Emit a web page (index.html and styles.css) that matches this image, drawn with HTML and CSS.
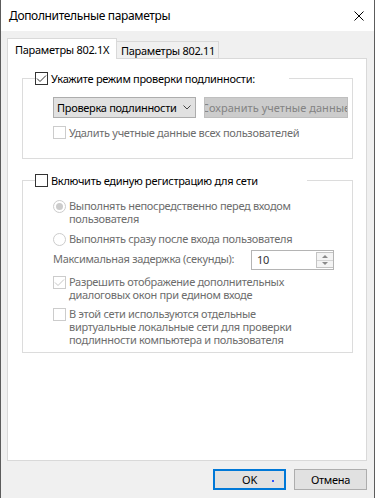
FILE: index.html
```html
<!DOCTYPE html>
<html lang="ru">
<head>
<meta charset="utf-8">
<title>Дополнительные параметры</title>
<link rel="stylesheet" href="styles.css">
</head>
<body>
<div class="window">
  <div class="titlebar">
    <span class="title">Дополнительные параметры</span>
    <svg class="close" width="10" height="10" viewBox="0 0 10 10"><path d="M0.5 0.5L9.5 9.5M9.5 0.5L0.5 9.5" stroke="#000" stroke-width="1" fill="none"/></svg>
  </div>
  <div class="client">
    <div class="tabs">
      <div class="tab tab-active">Параметры 802.1X</div>
      <div class="tab tab-inactive">Параметры 802.11</div>
    </div>
    <div class="panel">
      <fieldset class="group group-auth">
        <legend class="legend legend-auth">
          <span class="legend-inner">
            <span class="cb"><svg width="11" height="11" viewBox="0 0 11 11"><path d="M1 5.5L4 8.5L10 2.5" stroke="#333" stroke-width="1" fill="none"/></svg></span>
            <span>Укажите режим проверки подлинности:</span>
          </span>
        </legend>
        <div class="group-body body-auth">
          <div class="auth-row">
            <div class="combo"><span>Проверка подлинности</span><svg width="8" height="5" viewBox="0 0 8 5"><path d="M0.5 0.5L4 4L7.5 0.5" stroke="#444" stroke-width="1" fill="none"/></svg></div>
            <div class="btn-save"><span>Сохранить учетные данные</span></div>
          </div>
          <div class="opt opt-del"><span class="cb cb-dis"></span><span class="dis">Удалить учетные данные всех пользователей</span></div>
        </div>
      </fieldset>

      <fieldset class="group group-net">
        <legend class="legend legend-net">
          <span class="legend-inner">
            <span class="cb"></span>
            <span>Включить единую регистрацию для сети</span>
          </span>
        </legend>
        <div class="group-body body-net">
          <div class="opt"><span class="rb"><span class="rb-dot"></span></span><span class="dis">Выполнять непосредственно перед входом<br>пользователя</span></div>
          <div class="opt opt-r2"><span class="rb"></span><span class="dis">Выполнять сразу после входа пользователя</span></div>
          <div class="delay-row">
            <span class="dis delay-label">Максимальная задержка (секунды):</span>
            <div class="spin">
              <span class="spin-val">10</span>
              <span class="spin-btns">
                <span class="spin-btn"><span class="arr-up"></span></span>
                <span class="spin-btn"><span class="arr-down"></span></span>
              </span>
            </div>
          </div>
          <div class="opt opt-c4"><span class="cb cb-dis"><svg width="11" height="11" viewBox="0 0 11 11"><path d="M1 5.5L4 8.5L10 2.5" stroke="#c6c6c6" stroke-width="1" fill="none"/></svg></span><span class="dis">Разрешить отображение дополнительных<br>диалоговых окон при едином входе</span></div>
          <div class="opt opt-c5"><span class="cb cb-dis"></span><span class="dis">В этой сети используются отдельные<br>виртуальные локальные сети для проверки<br>подлинности компьютера и пользователя</span></div>
        </div>
      </fieldset>
    </div>
    <div class="buttons">
      <div class="btn btn-default">OK</div>
      <div class="btn">Отмена</div>
    </div>
  </div>
</div>
</body>
</html>
```

FILE: styles.css
```css
* { box-sizing: border-box; }
html, body { margin: 0; padding: 0; }
body {
  width: 375px;
  height: 498px;
  overflow: hidden;
  background: #f0f0f0;
  font-family: "Noto Sans", "Open Sans", sans-serif;
  font-size: 11px;
  line-height: 13px;
  letter-spacing: -0.3px;
  color: #000;
}
.window {
  height: 498px;
  display: flex;
  flex-direction: column;
  border-left: 1px solid #5c5c5c;
  border-right: 1px solid #5c5c5c;
  background: #f0f0f0;
}
.titlebar {
  height: 31px;
  flex: none;
  background: #fff;
  display: flex;
  align-items: center;
  justify-content: space-between;
  padding: 0 10px 0 8px;
}
.title { font-size: 12px; line-height: 16px; letter-spacing: -0.35px; }
.close { display: block; }
.client {
  flex: 1;
  padding: 7px 7px 0 6px;
  display: flex;
  flex-direction: column;
}
.tabs { display: flex; align-items: flex-end; }
.tab {
  border: 1px solid #d9d9d9;
  border-bottom: none;
  display: flex;
  align-items: center;
  white-space: nowrap;
}
.tab-active {
  position: relative;
  z-index: 1;
  width: 110px;
  height: 21px;
  margin-bottom: -1px;
  background: #fff;
  padding-left: 7px;
}
.tab-inactive {
  width: 103px;
  height: 17px;
  margin-left: -1px;
  background: #f0f0f0;
  padding-left: 4px;
}
.panel {
  height: 403px;
  background: #fff;
  border: 1px solid #d9d9d9;
  padding: 13px 0 0 14px;
}
.group {
  width: 331px;
  margin: 0;
  padding: 0;
  border: 1px solid #dcdcdc;
  min-width: 0;
}
.group-net { margin-top: 15px; }
.legend { padding: 0; margin-left: 12px; }
.legend-auth { width: 254px; }
.legend-net { width: 272px; }
.legend-inner {
  display: flex;
  align-items: center;
  gap: 3px;
  height: 13px;
  white-space: nowrap;
}
.cb {
  width: 13px;
  height: 13px;
  flex: none;
  border: 1px solid #333;
  background: #fff;
  display: flex;
}
.cb svg { display: block; }
.cb-dis { border-color: #cccccc; }
.rb {
  width: 13px;
  height: 13px;
  flex: none;
  border: 1px solid #cccccc;
  border-radius: 50%;
  background: #fff;
  display: flex;
  align-items: center;
  justify-content: center;
}
.rb-dot {
  width: 7px;
  height: 7px;
  border-radius: 50%;
  background: #cccccc;
}
.group-body { padding: 12px 0 19px 30px; }
.body-net { padding-bottom: 6px; }
.auth-row { display: flex; gap: 8px; }
.combo {
  width: 143px;
  height: 21px;
  background: #e1e1e1;
  border: 1px solid #adadad;
  display: flex;
  align-items: center;
  justify-content: space-between;
  padding: 0 4px 0 3px;
  white-space: nowrap;
}
.combo svg { display: block; }
.btn-save {
  width: 144px;
  height: 21px;
  background: #cccccc;
  border: 1px solid #bfbfbf;
  color: #838383;
  display: flex;
  align-items: center;
  justify-content: center;
  overflow: hidden;
  white-space: nowrap;
  letter-spacing: 0.05px;
}
.btn-save span { flex: none; }
.dis { color: #6d6d6d; }
.opt {
  display: flex;
  align-items: flex-start;
  gap: 3px;
  white-space: nowrap;
}
.opt .cb, .opt .rb { margin-top: 1px; }
.opt-del { margin-top: 8px; align-items: center; }
.opt-del .cb { margin-top: 0; }
.opt-r2 { margin-top: 7px; }
.delay-row {
  display: flex;
  align-items: flex-start;
  margin-top: 4px;
}
.delay-label { width: 198px; margin-top: 2px; white-space: nowrap; }
.spin {
  width: 83px;
  height: 20px;
  border: 1px solid #b4b4b4;
  background: #fff;
  display: flex;
}
.spin-val {
  flex: 1;
  padding-left: 5px;
  line-height: 18px;
  color: #333;
}
.spin-btns {
  width: 17px;
  display: flex;
  flex-direction: column;
  border: 1px solid #c4c4c4;
  border-right: none;
  margin: 1px 0;
  background: #f4f4f4;
}
.spin-btn {
  flex: 1;
  display: flex;
  align-items: center;
  justify-content: center;
}
.spin-btn + .spin-btn { border-top: 1px solid #d4d4d4; }
.arr-up {
  width: 0; height: 0;
  border-left: 3px solid transparent;
  border-right: 3px solid transparent;
  border-bottom: 3px solid #8a8a8a;
}
.arr-down {
  width: 0; height: 0;
  border-left: 3px solid transparent;
  border-right: 3px solid transparent;
  border-top: 3px solid #8a8a8a;
}
.opt-c4 { margin-top: 5px; }
.opt-c5 { margin-top: 6px; }
.buttons {
  display: flex;
  justify-content: flex-end;
  gap: 8px;
  margin-top: 8px;
}
.btn {
  width: 73px;
  height: 21px;
  background: #e1e1e1;
  border: 1px solid #adadad;
  display: flex;
  align-items: center;
  justify-content: center;
}
.btn-default {
  position: relative;
  border: 2px solid #0078d7;
}
.btn-default::after {
  content: "";
  position: absolute;
  left: 57px;
  top: 9px;
  width: 2px;
  height: 2px;
  background: #3050ff;
}
```
